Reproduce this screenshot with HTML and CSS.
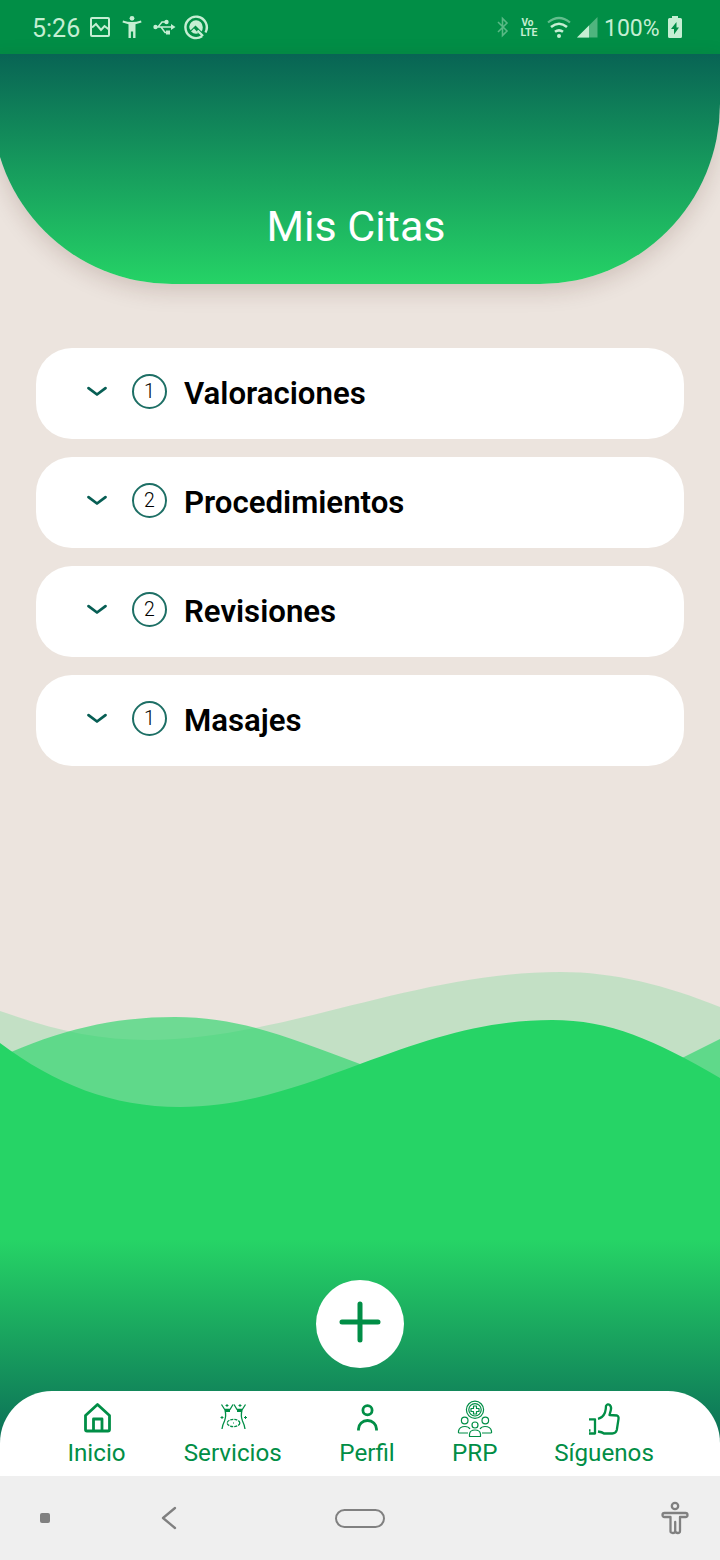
FILE: index.html
```html
<!DOCTYPE html>
<html lang="es">
<head>
  <meta charset="UTF-8" />
  <meta name="viewport" content="width=device-width, initial-scale=1" />
  <title>Mis Citas</title>
  <link rel="stylesheet" href="styles.css">
</head>
<body>
  <div class="phone">
    <!-- Status bar -->
    <div class="status">
      <span class="clock">5:26</span>
      <svg class="st-left" width="122" height="28" viewBox="88 13 122 28" fill="none" stroke="currentColor">
        <rect x="91" y="18" width="18" height="18" rx="1" stroke-width="2" />
        <path d="M92 27.500l4-3.500 5 6 3.500-4 4.500 3.500" stroke-width="2" />
        <g fill="currentColor" stroke="none">
          <circle cx="132" cy="18.300" r="2.400" />
          <path d="M123 20.500c6 2 12 2 18 0l.5 2-6 1.700V38h-2.400v-6.500h-2.200V38h-2.400V24.200l-6-1.700z" />
        </g>
        <path d="M155 27h17M158 27l4-5h4M161 27l4 5.500h3" stroke-width="1.500" />
        <g fill="currentColor" stroke="none">
          <circle cx="155.500" cy="27" r="2.200" />
          <circle cx="166.500" cy="22" r="2.200" />
          <path d="M171 24l4.500 3-4.500 3zM166 30.500h4v4h-4z" />
        </g>
        <path d="M202 36.300A10.700 10.700 0 1 1 205.500 32.500M197.500 30.500l5.500 5.500" stroke-width="2.400" />
        <path d="M196 20.200a7 7 0 0 1 6.800 7q0 2.500-1.300 4.300l-6-6-4.800 4.800q-1.500-1.500-1.500-3.500a7 7 0 0 1 6.800-6.600z" fill="currentColor" stroke="none" />
        <path d="M191 31.500l3-3 4.500 4.700q-4 1.500-7.500-1.700z" fill="currentColor" stroke="none" />
      </svg>
      <svg class="st-right" width="104" height="28" viewBox="495 13 104 28" fill="none" stroke="currentColor">
        <path d="M498 22l9 9-4.500 4.500V18.500L507 23l-9 9" stroke-width="1.600" opacity=".45" />
        <g fill="currentColor" stroke="none" class="volte">
          <text x="521.500" y="26">Vo</text>
          <text x="520.500" y="36" textLength="17" lengthAdjust="spacingAndGlyphs">LTE</text>
        </g>
        <path d="M548 22.500q11-9 22 0" stroke-width="2.200" opacity=".5" />
        <path d="M551 27q8-6.500 16 0M555 31.800q4-3 8 0" stroke-width="2.600" />
        <circle cx="559" cy="36" r="2" fill="currentColor" stroke="none" />
        <path d="M577 37.500L597.500 17v20.500z" fill="currentColor" stroke="none" opacity=".4" />
        <path d="M577 37.500L589 25.500v12z" fill="currentColor" stroke="none" />
      </svg>
      <span class="percent">100%</span>
      <svg class="battery" width="14" height="22" viewBox="0 0 14 22">
        <path d="M0 3.500q0-1.500 1.500-1.500H4V0h6v2h2.500q1.500 0 1.500 1.500v17q0 1.500-1.500 1.500h-11Q0 22 0 20.500z" fill="currentColor" />
        <path d="M8.500 6v5.500h2.500L6 18.500v-5.500H3z" fill="#018e46" />
      </svg>
    </div>

    <div class="screen">
      <header class="header">
        <h1>Mis Citas</h1>
      </header>

      <main class="list">
        <div class="item">
          <svg class="chevron" width="22" height="12" viewBox="0 0 22 12"><path d="M2.500 2.200l8.500 6.300 8.500-6.300" /></svg>
          <span class="count">1</span>
          <h2>Valoraciones</h2>
        </div>
        <div class="item">
          <svg class="chevron" width="22" height="12" viewBox="0 0 22 12"><path d="M2.500 2.200l8.500 6.300 8.500-6.300" /></svg>
          <span class="count">2</span>
          <h2>Procedimientos</h2>
        </div>
        <div class="item">
          <svg class="chevron" width="22" height="12" viewBox="0 0 22 12"><path d="M2.500 2.200l8.500 6.300 8.500-6.300" /></svg>
          <span class="count">2</span>
          <h2>Revisiones</h2>
        </div>
        <div class="item">
          <svg class="chevron" width="22" height="12" viewBox="0 0 22 12"><path d="M2.500 2.200l8.500 6.300 8.500-6.300" /></svg>
          <span class="count">1</span>
          <h2>Masajes</h2>
        </div>
      </main>

      <footer class="bottom">
        <!-- Waves behind the button and the tab bar -->
        <svg class="waves" width="720" height="516" viewBox="0 960 720 516">
          <defs>
            <linearGradient id="fade" gradientUnits="userSpaceOnUse" x1="0" y1="1240" x2="0" y2="1476">
              <stop offset="0" stop-color="#26d466" />
              <stop offset="1" stop-color="#075e54" />
            </linearGradient>
          </defs>
          <path fill="#25d366" opacity=".2" d="M0 1011C54 1030 97 1040 148 1040C280 1040 415 972 560 972C615 972 665 985 720 1007V1130H0z" />
          <path fill="#25d567" opacity=".63" d="M0 1057C60 1030 112 1017 175 1017C240 1017 290 1038 360 1064L420 1100H600L684 1057L720 1039V1130H0z" />
          <path fill="url(#fade)" d="M0 1043C55 1084 112 1107 180 1107C240 1107 290 1090 360 1064C430 1038 485 1020 552 1020C610 1020 655 1040 720 1078V1476H0z" />
        </svg>

        <button class="add" aria-label="Agregar cita">
          <svg width="42" height="42" viewBox="0 0 42 42"><path d="M21 3v36M3 21h36" /></svg>
        </button>

        <nav class="tabs">
          <a class="tab inicio">
            <svg width="36" height="38" viewBox="78 1400 36 38" stroke-width="2.800">
              <path d="M84.500 1415.500L96.500 1404.500l12 11v14q0 1.500-1.500 1.500H86q-1.500 0-1.500-1.500zM92.500 1431v-12h8.500v12" />
            </svg>
            <span>Inicio</span>
          </a>
          <a class="tab servicios">
            <svg width="36" height="38" viewBox="215 1400 36 38" stroke-width="1.300">
              <path d="M221.500 1404.500l3.500 5.500q1.500 6-.5 11-2 4-2.500 8M245.500 1404.500l-3.500 5.500q-1.500 6 .5 11 2 4 2.500 8" />
              <path d="M225 1409.500h5l3-5M242 1409.500h-5l-3-5" />
              <path d="M225 1411h5M237 1411h5" stroke-width="2.200" />
              <ellipse cx="233.500" cy="1423" rx="6.300" ry="3.600" stroke-dasharray="3 1" />
              <path d="M227 1404v3M225.500 1405.500h3M240 1404v3M238.500 1405.500h3M222 1416v3M220.500 1417.500h3M245.500 1416v3M244 1417.500h3M233 1423h1" stroke-width="1" />
            </svg>
            <span>Servicios</span>
          </a>
          <a class="tab perfil">
            <svg width="36" height="38" viewBox="349 1400 36 38" stroke-width="2.800">
              <circle cx="367.500" cy="1410.300" r="4.600" />
              <path d="M358.500 1430.500v-1.500a9 8.500 0 0 1 18 0v1.500" />
            </svg>
            <span>Perfil</span>
          </a>
          <a class="tab prp">
            <svg width="36" height="38" viewBox="457 1400 36 38" stroke-width="1.200">
              <circle cx="475" cy="1409.800" r="8.600" />
              <circle cx="475" cy="1409.800" r="6.200" />
              <path d="M473.500 1406h3v2.500h2.500v3h-2.500v2.500h-3v-2.500h-2.500v-3h2.500z" />
              <circle cx="464.700" cy="1420.500" r="3.300" />
              <circle cx="485.300" cy="1420.500" r="3.300" />
              <circle cx="475" cy="1425" r="3" />
              <path d="M458.500 1433v-2q1-4.500 6.500-4.500 3.500 0 5 2.500M458.500 1433h9.500M491.500 1433v-2q-1-4.500-6.500-4.500-3.500 0-5 2.500M491.500 1433h-9.500M469.500 1436.500v-2.500q.5-4 5.500-4t5.500 4v2.500z" />
            </svg>
            <span>PRP</span>
          </a>
          <a class="tab siguenos">
            <svg width="36" height="38" viewBox="586 1400 36 38" stroke-width="2.300">
              <path d="M589 1419.300h6v14.200h-6M589 1430.500h1.500M598 1418.800q5-1.300 7-6.300 1-3.500 1-6.500 1.500-2.800 4-.8 1.700 2 .8 5l-1.300 4.800 7.500.5q2 1 1.500 3.500l-1.700 11q-1 3.500-4.500 3.500H604q-2-1.500-6-2" />
            </svg>
            <span>Síguenos</span>
          </a>
        </nav>
      </footer>
    </div>

    <!-- Android navigation bar -->
    <div class="sysnav">
      <span class="dot"></span>
      <svg class="back" width="18" height="24" viewBox="0 0 18 24"><path d="M15 2L3 12l12 10" /></svg>
      <span class="home"></span>
      <svg class="access" width="28" height="34" viewBox="0 0 28 34">
        <circle cx="14" cy="5" r="3.200" />
        <path d="M3.500 12h21q2 0 2 2t-2 2h-5.500v14q0 2-2.200 2T14.200 30v-9 9q0 2-2.400 2T9.500 30V16h-6q-2 0-2-2t2-2z" />
      </svg>
    </div>
  </div>
</body>
</html>
```
FILE: styles.css
```css
* {
  margin: 0;
  padding: 0;
  box-sizing: border-box;
}
body {
  font-family: Roboto, "Liberation Sans", sans-serif;
  background: #ece4de;
}
.phone {
  width: 720px;
  height: 1560px;
  display: flex;
  flex-direction: column;
  overflow: hidden;
}

/* Status bar */
.status {
  height: 54px;
  flex: none;
  background: #018e46;
  color: #c5eed3;
  display: flex;
  align-items: center;
  padding: 0 38px 0 32px;
}
.clock {
  width: 56px;
  font-size: 25px;
  line-height: 28px;
  padding-top: 4px;
}
.st-right {
  margin-left: auto;
}
.volte {
  font-size: 10px;
  font-weight: bold;
}
.percent {
  width: 64px;
  padding-left: 5px;
  padding-top: 3px;
  font-size: 23px;
}
.battery {
  margin-left: 5px;
}

.screen {
  flex: 1;
  display: flex;
  flex-direction: column;
}
.header {
  height: 230px;
  margin-left: -8px;
  display: flex;
  justify-content: center;
  align-items: flex-end;
  padding-bottom: 33px;
  background: linear-gradient(#086454, #25d366);
  border-radius: 0 0 180px 180px;
  box-shadow: 0 7px 22px rgba(70, 30, 20, .17);
}
.header h1 {
  color: #fff;
  font-size: 43px;
  font-weight: 400;
  line-height: 50px;
}

/* Appointment groups */
.list {
  display: flex;
  flex-direction: column;
  gap: 18px;
  padding: 64px 36px 0;
}
.item {
  height: 91px;
  display: flex;
  align-items: center;
  padding: 0 0 4px 50px;
  background: #fff;
  border-radius: 36px;
}
.chevron path {
  fill: none;
  stroke: #075e54;
  stroke-width: 2.8;
  stroke-linecap: round;
  stroke-linejoin: round;
}
.count {
  width: 35px;
  height: 35px;
  margin: 0 17px 0 24px;
  border: 2px solid #1d6f65;
  border-radius: 50%;
  font-size: 19.5px;
  font-weight: 300;
  line-height: 32px;
  text-align: center;
}
.item h2 {
  font-size: 31.2px;
  font-weight: 600;
  line-height: 38px;
  padding-top: 4px;
}

/* Bottom area */
.bottom {
  position: relative;
  height: 516px;
  margin-top: auto;
  display: flex;
  flex-direction: column;
  justify-content: flex-end;
  align-items: center;
}
.waves {
  position: absolute;
  left: 0;
  top: 0;
}
.add {
  position: relative;
  width: 88px;
  height: 88px;
  margin-bottom: 23px;
  padding-bottom: 5px;
  border: none;
  border-radius: 50%;
  background: #fff;
  display: flex;
  justify-content: center;
  align-items: center;
}
.add path {
  stroke: #018e46;
  stroke-width: 5;
  stroke-linecap: round;
}
.tabs {
  position: relative;
  width: 100%;
  height: 85px;
  display: flex;
  justify-content: space-between;
  padding: 9px 67px 0;
  background: #fff;
  border-radius: 52px 52px 0 0;
}
.tab {
  display: flex;
  flex-direction: column;
  align-items: center;
  color: #018e46;
  font-size: 24.2px;
  line-height: 30px;
  white-space: nowrap;
}
.inicio {
  width: 59px;
}
.servicios, .siguenos {
  width: 98px;
}
.perfil {
  width: 55px;
}
.prp {
  width: 45px;
}
.tab svg {
  fill: none;
  stroke: #018e46;
  stroke-linejoin: round;
}

/* System navigation */
.sysnav {
  height: 84px;
  flex: none;
  display: flex;
  align-items: center;
  padding: 0 31px 0 40px;
  background: #efefef;
}
.sysnav svg {
  fill: none;
  stroke: #808080;
  stroke-width: 2.3;
  stroke-linejoin: round;
  stroke-linecap: round;
}
.dot {
  width: 10px;
  height: 10px;
  border-radius: 2px;
  background: #808080;
}
.back {
  margin-left: 110px;
}
.home {
  width: 50px;
  height: 19px;
  margin-left: 157px;
  border: 2.5px solid #808080;
  border-radius: 10px;
}
.access {
  margin-left: auto;
}
```
